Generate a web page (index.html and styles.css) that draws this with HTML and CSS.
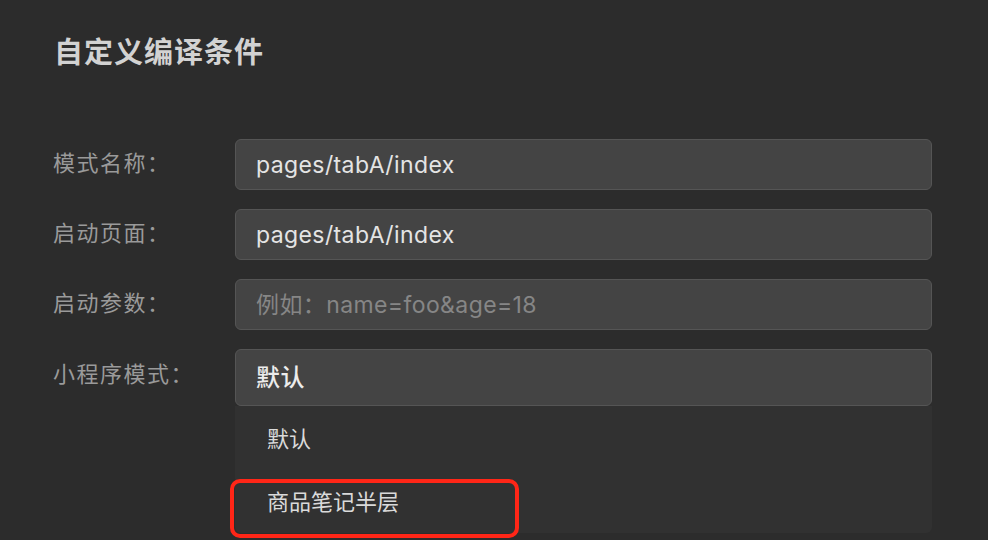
FILE: index.html
```html
<!DOCTYPE html>
<html lang="zh-CN">
<head>
  <meta charset="UTF-8">
  <title>自定义编译条件</title>
  <link rel="stylesheet" href="styles.css">
</head>
<body>
  <div class="dialog">
    <h1 class="dialog__title">自定义编译条件</h1>
    <div class="form">
      <div class="form__row">
        <label class="form__label">模式名称：</label>
        <div class="form__field">pages/tabA/index</div>
      </div>
      <div class="form__row">
        <label class="form__label">启动页面：</label>
        <div class="form__field">pages/tabA/index</div>
      </div>
      <div class="form__row">
        <label class="form__label">启动参数：</label>
        <div class="form__field form__field--placeholder">例如：name=foo&amp;age=18</div>
      </div>
      <div class="form__row form__row--select">
        <label class="form__label">小程序模式：</label>
        <div class="select">
          <div class="form__field select__value">默认</div>
          <ul class="select__menu">
            <li class="select__option">默认</li>
            <li class="select__option select__option--marked">商品笔记半层</li>
          </ul>
        </div>
      </div>
    </div>
  </div>
</body>
</html>
```
FILE: styles.css
```css
html {
  box-sizing: border-box;
  background: #2c2c2c;
}

*, *:before, *:after {
  box-sizing: inherit;
}

body {
  margin: 0;
  height: 540px;
  overflow: hidden;
  font-family: Inter, "Noto Sans CJK SC", sans-serif;
}

.dialog {
  padding: 33px 0 0 54px;
}

.dialog__title {
  margin: 0;
  font-size: 29px;
  line-height: 40px;
  font-weight: 700;
  letter-spacing: 1px;
  color: #d2d2d2;
}

.form {
  margin-top: 66px;
  display: flex;
  flex-direction: column;
  gap: 19px;
}

.form__row {
  display: flex;
  align-items: flex-start;
}

.form__label {
  width: 182px;
  margin-left: -1px;
  font-size: 22px;
  letter-spacing: 1.5px;
  line-height: 49px;
  color: #9a9a9a;
}

.form__field {
  width: 697px;
  height: 51px;
  padding: 0 20px;
  background: #444444;
  border: 1px solid #555555;
  border-radius: 6px;
  font-size: 23px;
  letter-spacing: 0.4px;
  line-height: 51px;
  color: #e4e4e4;
}

.form__field--placeholder {
  color: #868686;
  word-spacing: 2px;
}

.form__row--select .form__label {
  line-height: 51px;
}

.select {
  width: 697px;
}

.select__value {
  height: 57px;
  line-height: 56px;
  font-size: 24px;
  font-weight: 500;
  color: #ececec;
}

.select__menu {
  position: relative;
  list-style: none;
  margin: 0;
  padding: 2px 0 0;
  height: 127px;
  background: #313131;
  border-radius: 0 0 6px 6px;
}

.select__option {
  height: 63px;
  padding-left: 32px;
  font-size: 22px;
  line-height: 63px;
  color: #dadada;
}

.select__option--marked {
  position: relative;
}

.select__option--marked:after {
  content: "";
  position: absolute;
  left: -5px;
  top: 8px;
  width: 289px;
  height: 59px;
  border: 4px solid #ff2617;
  border-radius: 10px;
}
```
